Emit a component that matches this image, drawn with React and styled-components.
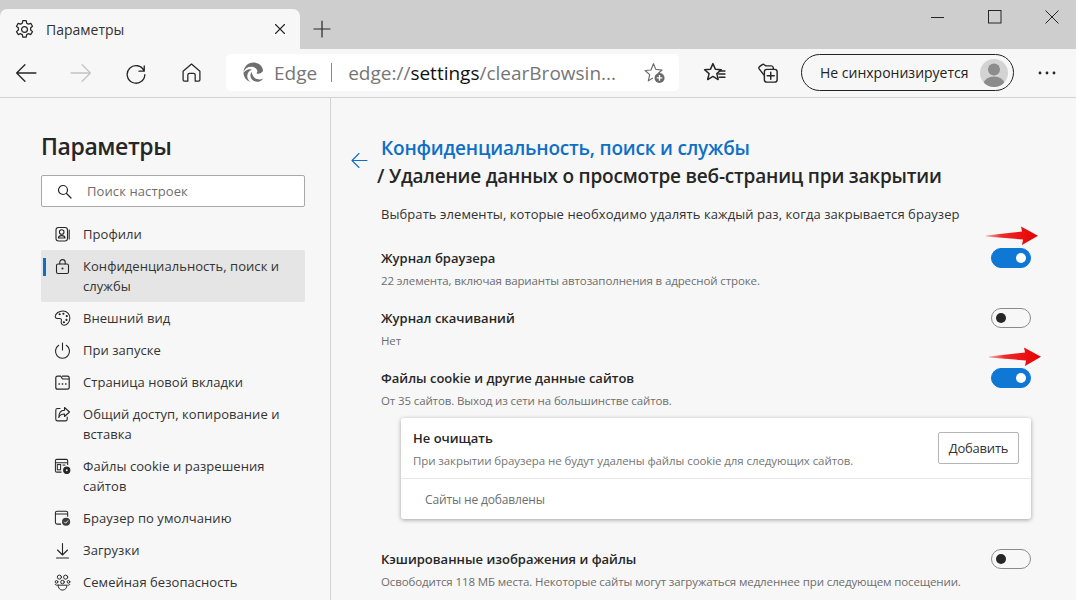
import React from 'react'
import styled, { createGlobalStyle } from 'styled-components'

const GlobalStyle = createGlobalStyle`
  html, body {
    margin: 0;
    padding: 0;
    background: #f7f7f7;
  }
  body {
    font-family: "Open Sans", "Noto Sans", "Liberation Sans", sans-serif;
    color: #262626;
    -webkit-font-smoothing: subpixel-antialiased;
  }
`

const Window = styled.div`
  position: relative;
  width: 1076px;
  height: 600px;
  overflow: hidden;
  display: flex;
  flex-direction: column;
  background: #f7f7f7;
`

const TabStrip = styled.div`
  height: 49px;
  flex: none;
  background: #cecece;
  display: flex;
  align-items: flex-end;
`

const Tab = styled.div`
  width: 300px;
  height: 40px;
  box-sizing: border-box;
  padding: 0 14px;
  display: flex;
  align-items: center;
  gap: 11px;
  background: #f7f7f7;
  border-radius: 7px 7px 0 0;
  font-size: 14px;
  color: #333;
`

const TabTitle = styled.span`
  flex: 1;
`

const NewTab = styled.div`
  width: 44px;
  height: 40px;
  display: flex;
  align-items: center;
  justify-content: center;
`

const WindowControls = styled.div`
  margin-left: auto;
  margin-right: -4px;
  height: 49px;
  display: flex;
  align-items: flex-start;
`

const WindowButton = styled.div`
  width: 57px;
  height: 34px;
  display: flex;
  align-items: center;
  justify-content: center;
`

const Toolbar = styled.div`
  height: 49px;
  flex: none;
  box-sizing: border-box;
  border-bottom: 1px solid #d2d2d2;
  display: flex;
  align-items: flex-start;
  padding-top: 5px;
`

const NavButtons = styled.div`
  width: 226px;
  height: 37px;
  flex: none;
  display: flex;
  align-items: center;
  padding-left: 4px;
  box-sizing: border-box;
`

const ToolButton = styled.div`
  width: ${p => p.$w || 55}px;
  height: 37px;
  flex: none;
  display: flex;
  align-items: center;
  justify-content: center;
`

const AddressBar = styled.div`
  width: 453px;
  height: 37px;
  flex: none;
  box-sizing: border-box;
  background: #fff;
  border-radius: 5px;
  display: flex;
  align-items: center;
  padding: 0 13px 0 17px;
  font-size: 19px;
  color: #767676;
`

const Origin = styled.span`
  margin-left: 10px;
`

const Separator = styled.span`
  width: 1px;
  height: 19px;
  background: #8a8a8a;
  margin: 0 16px 0 14px;
`

const Url = styled.span`
  flex: 1;
  white-space: nowrap;
  color: #767676;
  b {
    font-weight: 400;
    color: #111;
  }
`

const SyncPill = styled.div`
  width: 213px;
  height: 37px;
  flex: none;
  box-sizing: border-box;
  margin-left: 14px;
  border: 1px solid #222;
  border-radius: 19px;
  display: flex;
  align-items: center;
  justify-content: space-between;
  padding: 0 5px 0 18px;
  font-size: 14px;
  color: #222;
`

const Avatar = styled.div`
  width: 28px;
  height: 28px;
  border-radius: 50%;
  background: #d3d3d3;
  overflow: hidden;
`

const Body = styled.div`
  flex: 1;
  display: flex;
  min-height: 0;
`

const Sidebar = styled.aside`
  width: 331px;
  flex: none;
  box-sizing: border-box;
  border-right: 1px solid #d2d2d2;
  padding: 31px 25px 0 41px;
`

const SideTitle = styled.h1`
  margin: 0 0 12px 0;
  font-size: 23px;
  line-height: 34px;
  font-weight: 600;
  letter-spacing: -0.4px;
  color: #262626;
`

const SearchBox = styled.div`
  height: 32px;
  box-sizing: border-box;
  border: 1px solid #a8a8a8;
  border-radius: 2px;
  background: #fff;
  display: flex;
  align-items: center;
  gap: 15px;
  padding-left: 15px;
  font-size: 13px;
  letter-spacing: 0.1px;
  color: #6e6e6e;
  margin-bottom: 11px;
`

const NavList = styled.nav`
  display: flex;
  flex-direction: column;
`

const NavItem = styled.div`
  position: relative;
  display: flex;
  align-items: flex-start;
  gap: 12px;
  padding: 6px 10px 6px 13px;
  border-radius: 2px;
  background: ${p => (p.$active ? '#e5e5e5' : 'transparent')};
  font-size: 13px;
  line-height: 20px;
  letter-spacing: 0.05px;
  color: #333;
`

const ActiveMark = styled.span`
  position: absolute;
  left: 2px;
  top: 8px;
  width: 3px;
  height: 18px;
  background: #0f6fc6;
`

const NavIcon = styled.span`
  width: 17px;
  height: 20px;
  flex: none;
  display: flex;
  align-items: center;
  justify-content: center;
`

const Main = styled.main`
  flex: 1;
  box-sizing: border-box;
  padding: 36px 45px 0 20px;
`

const Header = styled.div`
  display: flex;
  align-items: flex-start;
  gap: 13px;
`

const BackLink = styled.div`
  width: 17px;
  height: 50px;
  flex: none;
  display: flex;
  align-items: center;
  padding-top: 3px;
  box-sizing: border-box;
`

const Crumbs = styled.div`
  font-size: 19px;
  line-height: 28px;
  font-weight: 600;
  letter-spacing: -0.2px;
`

const CrumbLink = styled.div`
  color: #0f6fc6;
`

const CrumbTitle = styled.div`
  margin-left: -4px;
  color: #262626;
`

const Intro = styled.p`
  margin: 14px 0 0 30px;
  font-size: 13px;
  line-height: 20px;
  letter-spacing: 0.07px;
  color: #333;
`

const Rows = styled.div`
  margin: 24px 0 0 30px;
`

const SettingRow = styled.div`
  display: flex;
  justify-content: space-between;
  align-items: flex-start;
  height: ${p => p.$h || 60}px;
`

const SettingName = styled.div`
  font-size: 13px;
  line-height: 20px;
  font-weight: 600;
  color: #262626;
`

const SettingNote = styled.div`
  margin-top: 3px;
  font-size: 11.5px;
  line-height: 20px;
  letter-spacing: -0.12px;
  color: #6e6e6e;
`

const Toggle = styled.div`
  width: 40px;
  height: 20px;
  flex: none;
  box-sizing: border-box;
  border-radius: 10px;
  display: flex;
  align-items: center;
  padding: 0 4px;
  justify-content: ${p => (p.$on ? 'flex-end' : 'flex-start')};
  background: ${p => (p.$on ? '#0f78d4' : 'transparent')};
  border: 1px solid ${p => (p.$on ? '#0f78d4' : '#8a8a8a')};
`

const Knob = styled.span`
  width: 10px;
  height: 10px;
  border-radius: 50%;
  background: ${p => (p.$on ? '#fff' : '#262626')};
`

const Card = styled.section`
  margin: 0 0 30px 20px;
  width: 630px;
  height: 101px;
  background: #fff;
  border-radius: 3px;
  box-shadow: 0 1px 4px rgba(0, 0, 0, 0.35);
`

const CardHead = styled.div`
  height: 61px;
  box-sizing: border-box;
  border-bottom: 1px solid #e6e6e6;
  display: flex;
  justify-content: space-between;
  align-items: flex-start;
  padding: 10px 12px 0 12px;
`

const CardTitle = styled.div`
  font-size: 13px;
  line-height: 20px;
  font-weight: 600;
  color: #262626;
`

const CardNote = styled.div`
  margin-top: 3px;
  font-size: 11.5px;
  line-height: 20px;
  letter-spacing: -0.09px;
  color: #767676;
`

const AddButton = styled.div`
  width: 81px;
  height: 32px;
  margin-top: 4px;
  box-sizing: border-box;
  border: 1px solid #b5b5b5;
  border-radius: 2px;
  display: flex;
  align-items: center;
  justify-content: center;
  font-size: 13px;
  letter-spacing: -0.2px;
  color: #333;
`

const CardEmpty = styled.div`
  padding: 11px 24px;
  font-size: 12px;
  line-height: 20px;
  letter-spacing: -0.15px;
  color: #6e6e6e;
`

const ArrowMark = styled.svg`
  position: absolute;
  left: ${p => p.$x}px;
  top: ${p => p.$y}px;
`

const Stroke = ({ size = 20, color = '#262626', width = 1.3, vb = 20, children }) => (
  <svg width={size} height={size} viewBox={`0 0 ${vb} ${vb}`} fill="none" stroke={color} strokeWidth={width} strokeLinecap="round" strokeLinejoin="round">
    {children}
  </svg>
)

const Gear = () => (
  <Stroke size={21} width={1.2}>
    <circle cx="10" cy="10" r="2.8" />
    <path d="M8.4 1.6h3.2l.5 2.4 1.6.9 2.3-.8 1.6 2.8-1.8 1.6v1.9l1.8 1.6-1.6 2.8-2.3-.8-1.6.9-.5 2.4H8.4l-.5-2.4-1.6-.9-2.3.8-1.6-2.8 1.8-1.6V8.5L2.4 6.9 4 4.1l2.3.8 1.6-.9z" />
  </Stroke>
)

const EdgeLogo = () => (
  <svg width="21" height="21" viewBox="0 0 20 20">
    <path fill="#6f6f6f" d="M18.9 7.2C18 3.3 14.4.5 10 .5 4.700.5.800 4.500.500 9.400 1.800 6.300 4.700 4.500 7.700 4.500c3.400 0 5.900 2 6 4.300 0 .9-.5 1.500-1 1.800 1 .6 2.600.7 3.900.1 1.700-.7 2.800-1.900 2.300-3.500z" />
    <path fill="#6f6f6f" d="M.5 10c0 4.200 2.600 7.800 6.500 9-2.200-1.500-3.200-4-2.900-6.300.3-2.600 2-4.800 4.400-5.400-2-.8-4.400-.5-6 1.100C1.200 9.700.5 9.700.5 10z" />
    <path fill="#6f6f6f" d="M8.400 9.500c-1.700 1.700-1.800 4.600-.2 6.700 1.800 2.300 5 3.300 7.900 2.100 1.300-.6 2.400-1.500 3.100-2.700-2.300 1.400-5.600 1.300-7.900-.4-1.500-1.100-2.600-3-2.900-5.700z" />
  </svg>
)

const StarPlus = () => (
  <svg width="23" height="23" viewBox="0 0 22 22" fill="none">
    <path stroke="#6a6a6a" strokeWidth="1.1" strokeLinejoin="round" d="M9.400 16.300 5.100 19l1.300-5.900-4.400-4 5.700-.5L10 2.500l2.300 5.500 5.900.6-3.800 3.400" />
    <circle cx="15.800" cy="16.200" r="4.800" fill="#6a6a6a" />
    <path stroke="#fff" strokeWidth="1.300" d="M15.800 13.500v5.400M13.100 16.200h5.400" />
  </svg>
)

const FavList = () => (
  <Stroke size={23} vb={22} width={1.4}>
    <path d="M9.500 2.500l2.300 5.300 5.700.5-4.300 3.800 1.300 5.600-5-3-5 3 1.300-5.600L1.500 8.300l5.700-.5z" />
    <path d="M15 12.500h6M15.500 15.500h5.500M15.500 9.500h5.500" />
  </Stroke>
)

const Collections = () => (
  <Stroke size={22} width={1.3}>
    <path d="M6 11.500 2 6.200c-.5-.7-.4-1.500.3-2L4.800 2.400c.6-.4 1.300-.3 1.800.1L8 3.500h5c1 0 1.700.7 1.800 1.700v1.300" />
    <rect x="6.700" y="6.700" width="11.600" height="11.600" rx="2.200" />
    <path d="M12.500 9.300v6.400M9.300 12.500h6.400" />
  </Stroke>
)

const NavIcons = {
  profile: (
    <Stroke size={17} vb={17} width={1.1}>
      <rect x="2" y="1.500" width="11.500" height="13.500" rx="2.500" />
      <circle cx="7.700" cy="6" r="2.300" />
      <path d="M4.400 12c0-1.800 1.400-2.400 3.300-2.400s3.300.6 3.300 2.400zM15.200 4v9" />
    </Stroke>
  ),
  lock: (
    <Stroke size={17} vb={17} width={1.1}>
      <rect x="2.500" y="6" width="12" height="9.500" rx="1.500" />
      <path d="M5.800 6V4.300a2.700 2.700 0 0 1 5.400 0V6" />
      <circle cx="8.500" cy="10.500" r=".5" fill="#262626" />
    </Stroke>
  ),
  palette: (
    <Stroke size={18} vb={18} width={1.1}>
      <path d="M9.500 1.500c-4 0-8 2.500-8.200 6-.1 2 2 2.300 4 2 2-.2 2.800.7 2.500 2.300-.3 1.500-.5 4 2 4.700 3.500.7 7-3 7-7.500 0-4-3-7.500-7.300-7.500z" />
      <circle cx="6" cy="5" r=".6" fill="#262626" />
      <circle cx="10" cy="4.500" r=".6" fill="#262626" />
      <circle cx="13.500" cy="7" r=".6" fill="#262626" />
      <circle cx="13.200" cy="11" r=".6" fill="#262626" />
      <circle cx="10.500" cy="13.500" r=".6" fill="#262626" />
    </Stroke>
  ),
  power: (
    <Stroke size={17} vb={17} width={1.1}>
      <path d="M8.500 1v7M4.700 3.300a7 7 0 1 0 7.600 0" />
    </Stroke>
  ),
  newtab: (
    <Stroke size={17} vb={17} width={1.2}>
      <path d="M1.800 4c0-1 .7-1.800 1.700-1.800h3.300L8.500 5h6.700v8.500c0 1-.7 1.700-1.700 1.700h-10c-1 0-1.700-.7-1.700-1.700zM8.500 2.200h5c1 0 1.700.8 1.700 1.800v1" />
      <path d="M5 10h.4M8.300 10h.4M11.600 10h.4" strokeWidth="1.500" />
    </Stroke>
  ),
  share: (
    <Stroke size={17} vb={17} width={1.1}>
      <path d="M6 2.500H3.500c-1 0-1.700.7-1.700 1.700v9c0 1 .7 1.700 1.700 1.700h8c1 0 1.700-.7 1.700-1.700V11" />
      <path d="M10.500 1.500l5 4.500-5 4.500V8C7.500 8 5.500 9.500 4.800 11.500c0-4 2-7 5.700-7.200z" />
    </Stroke>
  ),
  cookie: (
    <svg width="18" height="18" viewBox="0 0 18 18" fill="none" stroke="#262626" strokeWidth="1.100">
      <path d="M8 15.500H3c-1 0-1.500-.6-1.500-1.500V3.500C1.500 2.600 2 2 3 2h10c1 0 1.500.6 1.500 1.500V8M1.500 5.500h13" />
      <rect x="3.500" y="7.500" width="3.500" height="5.500" />
      <path d="M9 8h3" />
      <circle cx="13.500" cy="13.500" r="3.300" fill="#262626" />
      <circle cx="13.500" cy="13.500" r="1" fill="#f7f7f7" stroke="none" />
    </svg>
  ),
  browser: (
    <svg width="18" height="18" viewBox="0 0 18 18" fill="none" stroke="#262626" strokeWidth="1.100">
      <path d="M7.500 15.500H3.300c-1 0-1.800-.7-1.800-1.700V3.500c0-1 .8-1.700 1.800-1.700h9.400c1 0 1.800.7 1.800 1.700v4.300M1.500 4.800h13" />
      <circle cx="12.800" cy="13" r="4.300" fill="#3c3c3c" stroke="none" />
      <path d="M10.800 13l1.500 1.500 2.600-2.800" stroke="#fff" strokeWidth="1" />
    </svg>
  ),
  download: (
    <Stroke size={17} vb={17} width={1.1}>
      <path d="M8.500 1.500v11M3.500 8l5 5 5-5M2.500 16h12" />
    </Stroke>
  ),
  family: (
    <Stroke size={19} vb={19} width={1.1}>
      <circle cx="6" cy="3.500" r="2.300" />
      <circle cx="13" cy="3.500" r="2.300" />
      <circle cx="9.500" cy="9" r="2" />
      <circle cx="2.800" cy="8.800" r="1.500" />
      <circle cx="16.200" cy="8.800" r="1.500" />
      <path d="M4.500 12.500h10c0 3-2 5.500-5 5.500s-5-2.500-5-5.500zM1.200 11.500c.8 1 1.500 1.200 2.300 1M17.800 11.500c-.8 1-1.500 1.200-2.300 1" />
    </Stroke>
  ),
}

const navItems = [
  { icon: 'profile', label: 'Профили' },
  { icon: 'lock', label: 'Конфиденциальность, поиск и службы', active: true },
  { icon: 'palette', label: 'Внешний вид' },
  { icon: 'power', label: 'При запуске' },
  { icon: 'newtab', label: 'Страница новой вкладки' },
  { icon: 'share', label: 'Общий доступ, копирование и вставка' },
  { icon: 'cookie', label: 'Файлы cookie и разрешения сайтов' },
  { icon: 'browser', label: 'Браузер по умолчанию' },
  { icon: 'download', label: 'Загрузки' },
  { icon: 'family', label: 'Семейная безопасность' },
]

const RedArrow = ({ x, y, w, id }) => (
  <ArrowMark $x={x} $y={y} width={w} height="22" viewBox="0 0 54 22">
    <defs>
      <linearGradient id={id} x1="0" x2="1" y1="0" y2="0">
        <stop offset="0" stopColor="#f9b0b0" />
        <stop offset="0.3" stopColor="#ee2a2a" />
        <stop offset="1" stopColor="#e60000" />
      </linearGradient>
    </defs>
    <path fill={`url(#${id})`} d="M0 10.500 36 6.500 35 1.500 52 10.700 36 20 37 14.500 0 11.500z" />
  </ArrowMark>
)

const Setting = ({ name, note, on, h }) => (
  <SettingRow $h={h}>
    <div>
      <SettingName>{name}</SettingName>
      <SettingNote>{note}</SettingNote>
    </div>
    <Toggle $on={on}>
      <Knob $on={on} />
    </Toggle>
  </SettingRow>
)

const App = () => {
  return (
    <Window>
      <GlobalStyle />
      <TabStrip>
        <Tab>
          <Gear />
          <TabTitle>Параметры</TabTitle>
          <Stroke size={12} vb={12} width={1.1}>
            <path d="M1.500 1.500l9 9M10.500 1.500l-9 9" />
          </Stroke>
        </Tab>
        <NewTab>
          <Stroke size={18} vb={18} width={1.2}>
            <path d="M9 1v16M1 9h16" />
          </Stroke>
        </NewTab>
        <WindowControls>
          <WindowButton>
            <svg width="14" height="14" viewBox="0 0 14 14" stroke="#262626" fill="none"><path d="M0 7.500h13" /></svg>
          </WindowButton>
          <WindowButton>
            <svg width="14" height="14" viewBox="0 0 14 14" stroke="#262626" fill="none"><rect x=".5" y=".5" width="12.500" height="12.500" /></svg>
          </WindowButton>
          <WindowButton>
            <svg width="14" height="14" viewBox="0 0 14 14" stroke="#262626" fill="none"><path d="M.5.500l13 13M13.500.500l-13 13" /></svg>
          </WindowButton>
        </WindowControls>
      </TabStrip>

      <Toolbar>
        <NavButtons>
          <ToolButton $w={44}>
            <Stroke size={22} width={1.2}><path d="M19 10H1.500M9 2.500 1.500 10 9 17.500" /></Stroke>
          </ToolButton>
          <ToolButton $w={66}>
            <Stroke size={22} width={1.2} color="#c4c4c4"><path d="M1 10h17.500M11 2.500l7.500 7.500-7.500 7.500" /></Stroke>
          </ToolButton>
          <ToolButton $w={44}>
            <Stroke size={22} width={1.2}><path d="M17.500 3.500v4.800h-4.800M17.300 8a8 8 0 1 0 .7 3.500" /></Stroke>
          </ToolButton>
          <ToolButton $w={66}>
            <Stroke size={21} width={1.2}><path d="M2 8.800 10 2l8 6.800V17c0 .8-.5 1.300-1.200 1.300h-3.300v-6a1.500 1.500 0 0 0-1.500-1.500H8a1.500 1.500 0 0 0-1.500 1.500v6H3.200C2.500 18.300 2 17.800 2 17z" /></Stroke>
          </ToolButton>
        </NavButtons>
        <AddressBar>
          <EdgeLogo />
          <Origin>Edge</Origin>
          <Separator />
          <Url>edge://<b>settings</b>/clearBrowsin...</Url>
          <StarPlus />
        </AddressBar>
        <ToolButton $w={70}><FavList /></ToolButton>
        <ToolButton $w={38}><Collections /></ToolButton>
        <SyncPill>
          Не синхронизируется
          <Avatar>
            <svg width="28" height="28" viewBox="0 0 28 28">
              <circle cx="14" cy="10.500" r="6" fill="#8c8c8c" />
              <ellipse cx="14" cy="24" rx="10" ry="6.500" fill="#8c8c8c" />
            </svg>
          </Avatar>
        </SyncPill>
        <ToolButton $w={65}>
          <svg width="18" height="4" viewBox="0 0 18 4" fill="#262626">
            <circle cx="2" cy="2" r="1.400" />
            <circle cx="9" cy="2" r="1.400" />
            <circle cx="16" cy="2" r="1.400" />
          </svg>
        </ToolButton>
      </Toolbar>

      <Body>
        <Sidebar>
          <SideTitle>Параметры</SideTitle>
          <SearchBox>
            <Stroke size={15} vb={15} width={1.2}>
              <circle cx="6" cy="6" r="4.500" />
              <path d="M9.500 9.500l4.500 4.500" />
            </Stroke>
            Поиск настроек
          </SearchBox>
          <NavList>
            {navItems.map(item => (
              <NavItem key={item.label} $active={item.active}>
                {item.active && <ActiveMark />}
                <NavIcon>{NavIcons[item.icon]}</NavIcon>
                <span>{item.label}</span>
              </NavItem>
            ))}
          </NavList>
        </Sidebar>

        <Main>
          <Header>
            <BackLink>
              <Stroke size={17} vb={17} color="#0f6fc6" width={1.1}>
                <path d="M16 8.500H1M8 1.500l-7 7 7 7" />
              </Stroke>
            </BackLink>
            <Crumbs>
              <CrumbLink>Конфиденциальность, поиск и службы</CrumbLink>
              <CrumbTitle>/ Удаление данных о просмотре веб-страниц при закрытии</CrumbTitle>
            </Crumbs>
          </Header>
          <Intro>Выбрать элементы, которые необходимо удалять каждый раз, когда закрывается браузер</Intro>
          <Rows>
            <Setting on name="Журнал браузера" note="22 элемента, включая варианты автозаполнения в адресной строке." />
            <Setting name="Журнал скачиваний" note="Нет" />
            <Setting on h={50} name="Файлы cookie и другие данные сайтов" note="От 35 сайтов. Выход из сети на большинстве сайтов." />
            <Card>
              <CardHead>
                <div>
                  <CardTitle>Не очищать</CardTitle>
                  <CardNote>При закрытии браузера не будут удалены файлы cookie для следующих сайтов.</CardNote>
                </div>
                <AddButton>Добавить</AddButton>
              </CardHead>
              <CardEmpty>Сайты не добавлены</CardEmpty>
            </Card>
            <Setting name="Кэшированные изображения и файлы" note="Освободится 118 МБ места. Некоторые сайты могут загружаться медленнее при следующем посещении." />
          </Rows>
        </Main>
      </Body>

      <RedArrow id="arrowA" x={986} y={225} w={54} />
      <RedArrow id="arrowB" x={988} y={346} w={56} />
    </Window>
  )
}

export default App
